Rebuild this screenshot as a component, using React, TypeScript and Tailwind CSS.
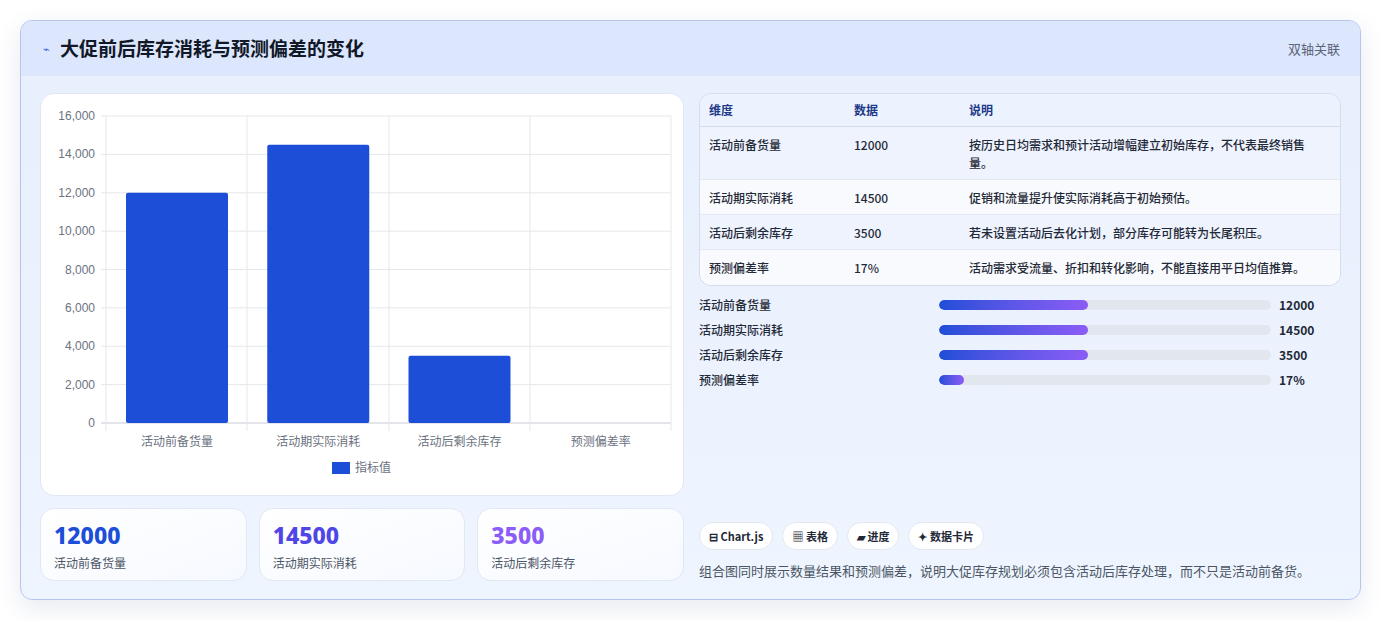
export default function App() {
  const f = { fontFamily: '"Noto Sans CJK SC", "Noto Sans", sans-serif' };
  const rows = [
    ["活动前备货量", "12000", "按历史日均需求和预计活动增幅建立初始库存，不代表最终销售量。", "bg-[#eef3fe]", "h-[53px]"],
    ["活动期实际消耗", "14500", "促销和流量提升使实际消耗高于初始预估。", "bg-[#f8fafd]", "h-[35px]"],
    ["活动后剩余库存", "3500", "若未设置活动后去化计划，部分库存可能转为长尾积压。", "bg-[#eef3fe]", "h-[35px]"],
    ["预测偏差率", "17%", "活动需求受流量、折扣和转化影响，不能直接用平日均值推算。", "bg-[#f8fafd]", "h-[35px]"],
  ];
  const bars = [
    ["活动前备货量", 45, "12000"],
    ["活动期实际消耗", 45, "14500"],
    ["活动后剩余库存", 45, "3500"],
    ["预测偏差率", 7.5, "17%"],
  ] as const;
  const px = (v: number) => 329 - (v / 16000) * 307;
  const ticks = [0, 2000, 4000, 6000, 8000, 10000, 12000, 14000, 16000];
  const cats = ["活动前备货量", "活动期实际消耗", "活动后剩余库存", "预测偏差率"];
  const vals = [12000, 14500, 3500, 0];
  return (
    <div className="w-[1381px] h-[621px] bg-white pt-[20px] px-[20px]" style={f}>
      <div className="h-[580px] rounded-[12px] border border-[#b8c4ee] bg-gradient-to-b from-[#e8effd] to-[#eef5ff] shadow-[0_8px_24px_rgba(60,80,150,0.12)] overflow-hidden flex flex-col">
        <div className="h-[55px] bg-[#dce6fd] flex items-center justify-between pl-[22px] pr-[20px]">
          <div className="flex items-center gap-[10px]">
            <span className="text-[#3b5bdb] text-[11px]">⌁</span>
            <span className="text-[19px] font-bold text-[#111827]">大促前后库存消耗与预测偏差的变化</span>
          </div>
          <span className="text-[13px] text-[#5b6478]">双轴关联</span>
        </div>
        <div className="flex gap-[15px] px-[19px] pt-[17px]">
          <div className="w-[644px] flex flex-col gap-[12px]">
            <div className="h-[403px] bg-white rounded-[14px] border border-[#e1e7f3]">
              <svg width="643" height="402">
                {ticks.map((t) => (
                  <g key={t}>
                    <line x1={60} x2={630} y1={px(t)} y2={px(t)} stroke={t === 0 ? "#c7ccd6" : "#e5e7eb"} />
                    <text x={54} y={px(t) + 4} textAnchor="end" fontSize="12" fill="#6b7280" fontFamily="Liberation Sans, sans-serif">{t.toLocaleString("en-US")}</text>
                  </g>
                ))}
                {[65, 206, 348, 489, 630].map((x) => (
                  <line key={x} x1={x} x2={x} y1={22} y2={337} stroke="#e5e7eb" />
                ))}
                {cats.map((c, i) => (
                  <g key={c}>
                    {vals[i] > 0 && <rect x={85 + i * 141.25} y={px(vals[i])} width={102} height={329 - px(vals[i])} rx={2} fill="#1d4ed8" />}
                    <text x={136 + i * 141.25} y={352} textAnchor="middle" fontSize="12" fill="#6b7280">{c}</text>
                  </g>
                ))}
                <rect x={291} y={368} width={18} height={12} fill="#1d4ed8" />
                <text x={314} y={378} fontSize="12" fill="#6b7280">指标值</text>
              </svg>
            </div>
            <div className="grid grid-cols-3 gap-[12px]">
              {[["12000", "活动前备货量", "text-[#1d4ed8]"], ["14500", "活动期实际消耗", "text-[#4f46e5]"], ["3500", "活动后剩余库存", "text-[#8b5cf6]"]].map(([v, l, c]) => (
                <div key={l} className="h-[73px] rounded-[14px] border border-[#e1e7f3] bg-gradient-to-br from-white to-[#f6f9ff] px-[13px] pt-[11px]">
                  <div className={`text-[23px] font-extrabold leading-[30px] ${c}`} style={{ fontFamily: '"Noto Sans", sans-serif' }}>{v}</div>
                  <div className="text-[12px] text-[#4b5563] mt-[4px]">{l}</div>
                </div>
              ))}
            </div>
          </div>
          <div className="flex-1 flex flex-col">
            <div className="rounded-[12px] border border-[#d5dcea] overflow-hidden text-[12px] text-[#1f2937] font-medium">
              <div className="h-[33px] flex items-center bg-[#edf3fe] border-b border-[#d5dcea] text-[#1e3a8a] font-bold">
                <div className="w-[154px] pl-[9px]">维度</div>
                <div className="w-[115px]">数据</div>
                <div>说明</div>
              </div>
              {rows.map(([a, b, c, bg, h]) => (
                <div key={a} className={`flex ${h} ${bg} border-b last:border-b-0 border-[#e3e8f1] pt-[9px]`}>
                  <div className="w-[154px] pl-[9px]">{a}</div>
                  <div className="w-[115px]">{b}</div>
                  <div className="flex-1 pr-[20px] leading-[18px]">{c}</div>
                </div>
              ))}
            </div>
            <div className="flex flex-col gap-[7px] mt-[10px] text-[12px] text-[#1f2937] font-medium">
              {bars.map(([l, w, v]) => (
                <div key={l} className="flex items-center h-[18px]">
                  <div className="w-[240px]">{l}</div>
                  <div className="w-[332px] h-[10px] rounded-full bg-[#e2e6ee] overflow-hidden">
                    <div className="h-full rounded-full bg-gradient-to-r from-[#1d4ed8] to-[#8b5cf6]" style={{ width: `${w}%` }} />
                  </div>
                  <div className="ml-[8px] font-bold">{v}</div>
                </div>
              ))}
            </div>
            <div className="flex gap-[9px] mt-[133px] text-[11px] font-bold text-[#1f2937]">
              {["⊟ Chart.js", "▦ 表格", "▰ 进度", "✦ 数据卡片"].map((t) => (
                <div key={t} className="h-[28px] px-[9px] rounded-full bg-white border border-[#e3e8f1] flex items-center">{t}</div>
              ))}
            </div>
            <div className="mt-[11px] text-[13px] text-[#4b5563]">组合图同时展示数量结果和预测偏差，说明大促库存规划必须包含活动后库存处理，而不只是活动前备货。</div>
          </div>
        </div>
      </div>
    </div>
  );
}
